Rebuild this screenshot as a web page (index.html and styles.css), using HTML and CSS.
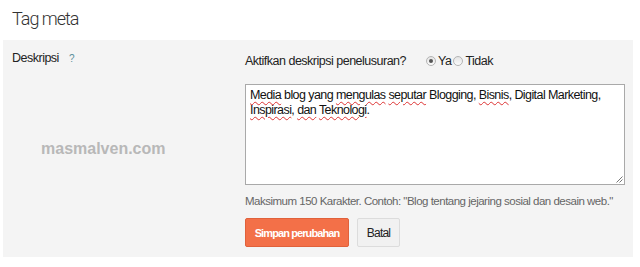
FILE: index.html
```html
<!DOCTYPE html>
<html>
<head>
<meta charset="utf-8">
<link rel="stylesheet" href="styles.css">
</head>
<body>
<h1 class="title">Tag meta</h1>
<div class="panel">
  <div class="label-col">
    <span class="label">Deskripsi</span><span class="help">?</span>
    <div class="watermark">masmalven.com</div>
  </div>
  <div class="field-col">
    <div class="question">
      <span class="q-text">Aktifkan deskripsi penelusuran?</span>
      <span class="radio checked"></span><span class="opt">Ya</span>
      <span class="radio"></span><span class="opt">Tidak</span>
    </div>
    <div class="textarea"><span class="sp">Media</span> blog yang <span class="sp">mengulas</span> <span class="sp">seputar</span> Blogging, <span class="sp">Bisnis</span>, Digital Marketing, <span class="sp">Inspirasi</span>, <span class="sp">dan</span> <span class="sp">Teknologi</span>.<svg class="grip" width="8" height="8" viewBox="0 0 8 8"><path d="M7.5 1.5L1.5 7.5M7.5 4.5L4.5 7.5" stroke="#777" stroke-width="1"/></svg></div>
    <div class="hint">Maksimum 150 Karakter. Contoh: "Blog tentang jejaring sosial dan desain web."</div>
    <div class="buttons">
      <button class="btn primary">Simpan perubahan</button>
      <button class="btn secondary">Batal</button>
    </div>
  </div>
</div>
</body>
</html>
```
FILE: styles.css
```css
html, body { margin: 0; padding: 0; background: #fff; }
body { font-family: "Liberation Sans", Arial, sans-serif; color: #222; width: 640px; height: 267px; overflow: hidden; }
.title { margin: 0; padding: 8px 0 0 12px; height: 32px; font-family: Roboto, "Liberation Sans", sans-serif; font-weight: 300; font-size: 18px; letter-spacing: -1px; line-height: 22px; color: #333; }
.panel { margin-left: 3px; width: 630px; height: 217px; background: #f4f4f4; display: flex; }
.label-col { flex: 0 0 233px; padding: 11px 0 0 9px; font-size: 12.5px; letter-spacing: -0.5px; }
.label { color: #222; }
.help { color: #5a8f9a; font-size: 10px; margin-left: 10px; letter-spacing: 0; }
.watermark { margin: 75px 0 0 29px; font-weight: bold; font-size: 16px; color: #b8b8b8; letter-spacing: 0; }
.field-col { display: flex; flex-direction: column; padding-top: 14px; font-size: 12.5px; letter-spacing: -0.5px; }
.question { display: flex; align-items: center; height: 14px; }
.q-text { margin-right: 20px; }
.radio { width: 10px; height: 10px; border-radius: 50%; border: 1px solid #b4b4b4; background: linear-gradient(#e4e4e4, #fbfbfb); box-sizing: border-box; margin-right: 2px; position: relative; }
.radio.checked::after { content: ""; position: absolute; left: 2px; top: 2px; width: 4px; height: 4px; border-radius: 50%; background: #555; }
.opt { margin-right: 2px; }
.textarea { margin-top: 16px; width: 380px; height: 101px; box-sizing: border-box; border: 1px solid #a9a9a9; background: #fff; padding: 3px 4px; line-height: 15px; color: #111; letter-spacing: -0.58px; position: relative; }
.sp { text-decoration: underline wavy #d33; text-decoration-thickness: 1px; text-underline-offset: 2px; }
.grip { position: absolute; right: 1px; bottom: 1px; }
.hint { margin-top: 9px; font-size: 11.5px; color: #666; line-height: 15px; white-space: nowrap; }
.buttons { display: flex; gap: 8px; margin-top: 9px; }
.btn { height: 29px; box-sizing: border-box; padding: 0; font-family: "Liberation Sans", Arial, sans-serif; border-radius: 2px; white-space: nowrap; }
.btn.primary { width: 104px; background: #f37048; border: 1px solid #e0613b; color: #fff; font-size: 11px; font-weight: bold; letter-spacing: -0.9px; }
.btn.secondary { width: 43px; background: #f1f1f1; border: 1px solid #dcdcdc; color: #222; font-size: 12px; letter-spacing: -0.8px; }
```
